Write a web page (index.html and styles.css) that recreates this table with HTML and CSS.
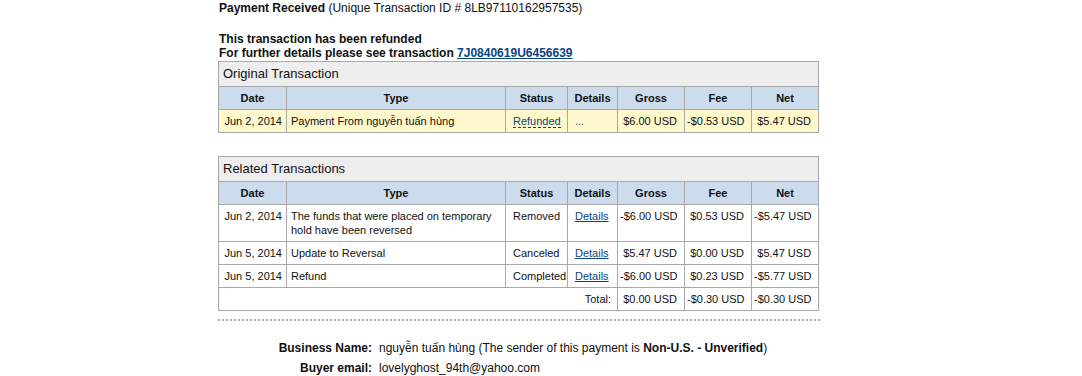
FILE: index.html
```html
<!DOCTYPE html>
<html>
<head>
<meta charset="utf-8">
<link rel="stylesheet" href="styles.css">
</head>
<body>
<div class="page">
  <p class="headline"><b>Payment Received</b> (Unique Transaction ID # 8LB97110162957535)</p>
  <div class="notice">
    <div>This transaction has been refunded</div>
    <div>For further details please see transaction <a href="#" class="link">7J0840619U6456639</a></div>
  </div>

  <table class="tx">
    <colgroup>
      <col class="c-date"><col class="c-type"><col class="c-status"><col class="c-details"><col class="c-gross"><col class="c-fee"><col class="c-net">
    </colgroup>
    <tr><th colspan="7" class="title">Original Transaction</th></tr>
    <tr class="head"><th>Date</th><th>Type</th><th>Status</th><th>Details</th><th>Gross</th><th>Fee</th><th>Net</th></tr>
    <tr class="hl">
      <td class="date">Jun 2, 2014</td>
      <td class="type">Payment From nguyễn tuấn hùng</td>
      <td class="status"><span class="dashed">Refunded</span></td>
      <td class="det"><span class="dots">...</span></td>
      <td class="amt">$6.00 USD</td>
      <td class="amt">-$0.53 USD</td>
      <td class="amt">$5.47 USD</td>
    </tr>
  </table>

  <table class="tx second">
    <colgroup>
      <col class="c-date"><col class="c-type"><col class="c-status"><col class="c-details"><col class="c-gross"><col class="c-fee"><col class="c-net">
    </colgroup>
    <tr><th colspan="7" class="title">Related Transactions</th></tr>
    <tr class="head"><th>Date</th><th>Type</th><th>Status</th><th>Details</th><th>Gross</th><th>Fee</th><th>Net</th></tr>
    <tr>
      <td class="date">Jun 2, 2014</td>
      <td class="type">The funds that were placed on temporary hold have been reversed</td>
      <td class="status">Removed</td>
      <td class="det"><a href="#" class="dlink">Details</a></td>
      <td class="amt">-$6.00 USD</td>
      <td class="amt">$0.53 USD</td>
      <td class="amt">-$5.47 USD</td>
    </tr>
    <tr>
      <td class="date">Jun 5, 2014</td>
      <td class="type">Update to Reversal</td>
      <td class="status">Canceled</td>
      <td class="det"><a href="#" class="dlink">Details</a></td>
      <td class="amt">$5.47 USD</td>
      <td class="amt">$0.00 USD</td>
      <td class="amt">$5.47 USD</td>
    </tr>
    <tr>
      <td class="date">Jun 5, 2014</td>
      <td class="type">Refund</td>
      <td class="status">Completed</td>
      <td class="det"><a href="#" class="dlink">Details</a></td>
      <td class="amt">-$6.00 USD</td>
      <td class="amt">$0.23 USD</td>
      <td class="amt">-$5.77 USD</td>
    </tr>
    <tr>
      <td colspan="4" class="total">Total:</td>
      <td class="amt">$0.00 USD</td>
      <td class="amt">-$0.30 USD</td>
      <td class="amt">-$0.30 USD</td>
    </tr>
  </table>

  <div class="sep"></div>

  <div class="info">
    <div class="label">Business Name:</div>
    <div class="value">nguyễn tuấn hùng (The sender of this payment is <b>Non-U.S. - Unverified</b>)</div>
    <div class="label">Buyer email:</div>
    <div class="value">lovelyghost_94th@yahoo.com</div>
  </div>
</div>
</body>
</html>
```
FILE: styles.css
```css
html, body {
  margin: 0;
  padding: 0;
  background: #fff;
}
body {
  font-family: Arial, "Liberation Sans", sans-serif;
  font-size: 12px;
  color: #111;
}
.page {
  padding-top: 1px;
  padding-left: 219px;
  width: 604px;
}
.headline {
  margin: 0;
  line-height: 14px;
}
.notice {
  margin-top: 17px;
  font-weight: bold;
  line-height: 14px;
}
.link {
  color: #084482;
  text-decoration: underline;
}
.tx {
  margin-left: -1px;
  margin-top: 1px;
  width: 600px;
  border-collapse: collapse;
  table-layout: fixed;
  font-size: 11px;
  line-height: 14px;
}
.tx.second {
  margin-top: 23px;
}
.c-date { width: 68px; }
.c-type { width: 219px; }
.c-status { width: 62px; }
.c-details { width: 50px; }
.c-gross { width: 67px; }
.c-fee { width: 67px; }
.c-net { width: 67px; }
.tx th, .tx td {
  border: 1px solid #a8a8a8;
  padding: 4px 4px;
  vertical-align: top;
  white-space: nowrap;
}
.tx .title {
  background: #eeeeee;
  text-align: left;
  font-weight: normal;
  font-size: 13px;
  line-height: 16px;
  padding: 4px 4px;
}
.tx .head th {
  background: #cddced;
  font-weight: bold;
  text-align: center;
}
.tx .hl td {
  background: #fff8cc;
}
.tx td.date {
  text-align: right;
}
.tx td.type {
  text-align: left;
  white-space: normal;
}
.tx td.status {
  padding-left: 7px;
  padding-right: 2px;
}
.tx td.det {
  padding-left: 7px;
}
.tx td.amt {
  text-align: right;
  padding-right: 7px;
  padding-left: 2px;
}
.tx td.total {
  text-align: right;
  padding-right: 6px;
}
.dashed {
  color: #084482;
  border-bottom: 1px dashed #084482;
}
.dots {
  color: #084482;
}
.dlink {
  color: #084482;
  text-decoration: underline;
}
.sep {
  margin-top: 8px;
  margin-left: -1px;
  width: 602px;
  border-top: 2px dotted #b0b0b0;
}
.info {
  margin-top: 20px;
  display: grid;
  grid-template-columns: 153px auto;
  column-gap: 7px;
  row-gap: 6px;
  line-height: 14px;
}
.label {
  font-weight: bold;
  text-align: right;
}
```
